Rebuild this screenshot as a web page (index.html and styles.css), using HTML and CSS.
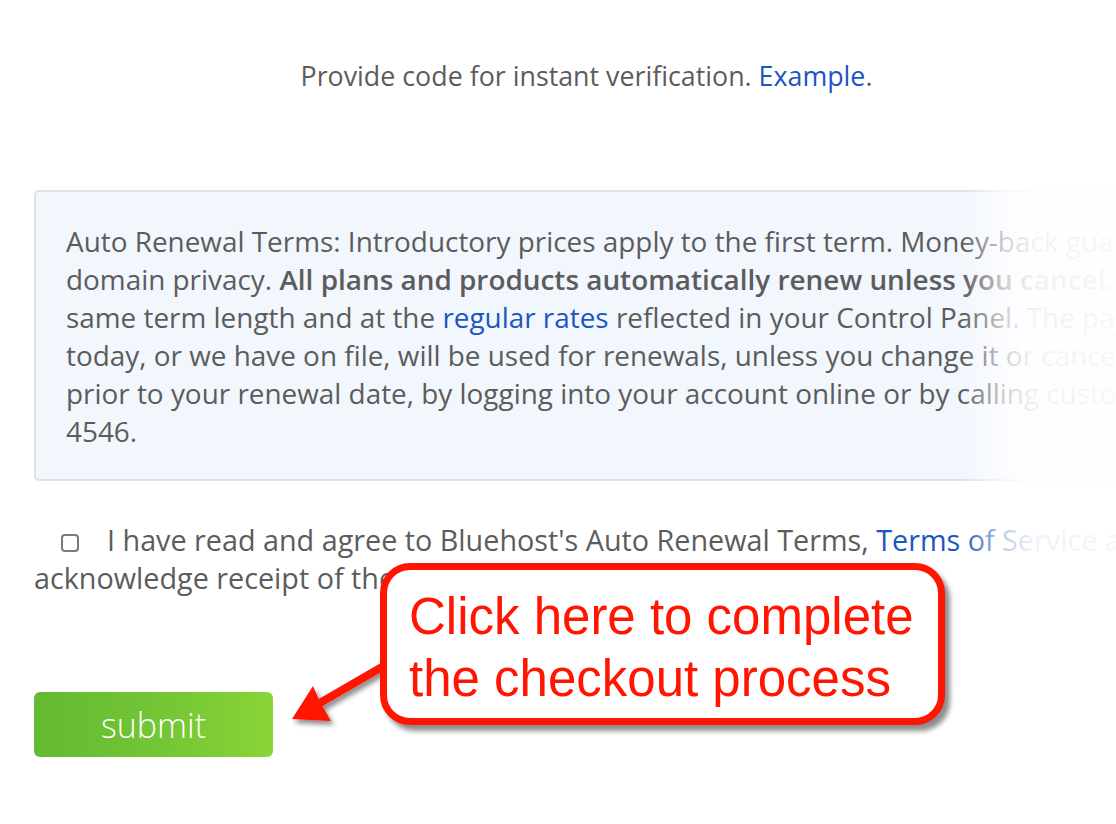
FILE: index.html
```html
<!DOCTYPE html>
<html lang="en">
<head>
<meta charset="utf-8">
<title>Checkout</title>
<link rel="stylesheet" href="styles.css">
</head>
<body>
<div class="page">
  <p class="verify">Provide code for instant verification. <a href="#">Example</a>.</p>

  <div class="terms-box">
    <span class="ln">Auto Renewal Terms: Introductory prices apply to the first term. Money-back guarantee applies</span>
    <span class="ln">domain privacy. <b>All plans and products automatically renew unless you cancel.</b> The renewal</span>
    <span class="ln">same term length and at the <a href="#">regular rates</a> reflected in your Control Panel. The payment</span>
    <span class="ln">today, or we have on file, will be used for renewals, unless you change it or cancel. You may</span>
    <span class="ln">prior to your renewal date, by logging into your account online or by calling customer support at 888-401-</span>
    <span class="ln">4546.</span>
  </div>

  <div class="agree">
    <span class="ln first"><span class="check"></span>I have read and agree to Bluehost's Auto Renewal Terms, <a href="#">Terms of Service</a> and</span>
    <span class="ln">acknowledge receipt of the <a href="#">Privacy Policy</a>.</span>
  </div>

  <button class="submit" type="button">submit</button>
</div>

<div class="fade"></div>

<svg class="arrow" width="120" height="90" viewBox="280 650 120 90">
  <defs>
    <filter id="sh" x="-30%" y="-30%" width="160%" height="160%">
      <feDropShadow dx="3" dy="4" stdDeviation="2.5" flood-color="#000" flood-opacity="0.45"/>
    </filter>
  </defs>
  <g filter="url(#sh)" fill="#ff1500" stroke="none">
    <path d="M386 660 L390 667 L321 707 L317 700 Z"/>
    <path d="M292 719 L313 686 L320 702 L331 721 Z"/>
  </g>
</svg>

<div class="callout">
  <span>Click here to complete</span>
  <span>the checkout process</span>
</div>
</body>
</html>
```
FILE: styles.css
```css
html, body {
  margin: 0;
  padding: 0;
  background: #fff;
  overflow: hidden;
}
body {
  width: 1116px;
  height: 824px;
  position: relative;
  font-family: "Open Sans", "Liberation Sans", sans-serif;
  color: #5c5c5c;
}
a {
  color: #1b56c2;
  text-decoration: none;
}
.page {
  width: 1105px;
  padding: 0 0 0 34px;
  display: flex;
  flex-direction: column;
  align-items: flex-start;
}
.verify {
  align-self: stretch;
  margin: 56px 0 0;
  text-align: center;
  font-size: 26.8px;
  line-height: 40px;
}
.terms-box {
  margin-top: 94px;
  width: 1200px;
  box-sizing: border-box;
  height: 291px;
  padding: 30px 30px 0;
  background: #f2f6fd;
  border: 2px solid #dde2e9;
  border-radius: 5px;
  font-size: 27.9px;
  line-height: 38px;
  display: flex;
  flex-direction: column;
}
.ln {
  display: block;
  white-space: nowrap;
}
.terms-box b {
  font-weight: 600;
}
.agree {
  margin-top: 40px;
  font-size: 28.75px;
  line-height: 38px;
  display: flex;
  flex-direction: column;
}
.check {
  display: inline-block;
  vertical-align: -1px;
  width: 14px;
  height: 14px;
  border: 2px solid #7a7a7a;
  border-radius: 4px;
  margin: 0 28px 0 27px;
}
.submit {
  margin-top: 95px;
  width: 239px;
  height: 65px;
  border: none;
  border-radius: 6px;
  background: linear-gradient(to right, #64b932 0%, #72c534 50%, #8ad436 100%);
  color: #fff;
  font-family: "Open Sans", sans-serif;
  font-weight: 300;
  font-size: 34px;
  padding: 0;
}
.fade {
  position: absolute;
  top: 0;
  left: 962px;
  width: 154px;
  height: 824px;
  background: linear-gradient(to right, rgba(255,255,255,0) 0px, rgba(255,255,255,0.7) 42px, rgba(255,255,255,0.92) 70px, rgba(255,255,255,0.95) 154px);
}
.arrow {
  position: absolute;
  left: 280px;
  top: 650px;
}
.callout {
  position: absolute;
  left: 380px;
  top: 563px;
  width: 565px;
  height: 162px;
  box-sizing: border-box;
  border: 7px solid #ff1500;
  border-radius: 30px;
  background: #fff;
  box-shadow: 5px 6px 5px rgba(0,0,0,0.45);
  padding: 16px 0 0 22px;
  display: flex;
  flex-direction: column;
  font-family: "Liberation Sans", Arial, sans-serif;
  font-size: 51px;
  line-height: 62px;
  color: #ff1500;
}
```
